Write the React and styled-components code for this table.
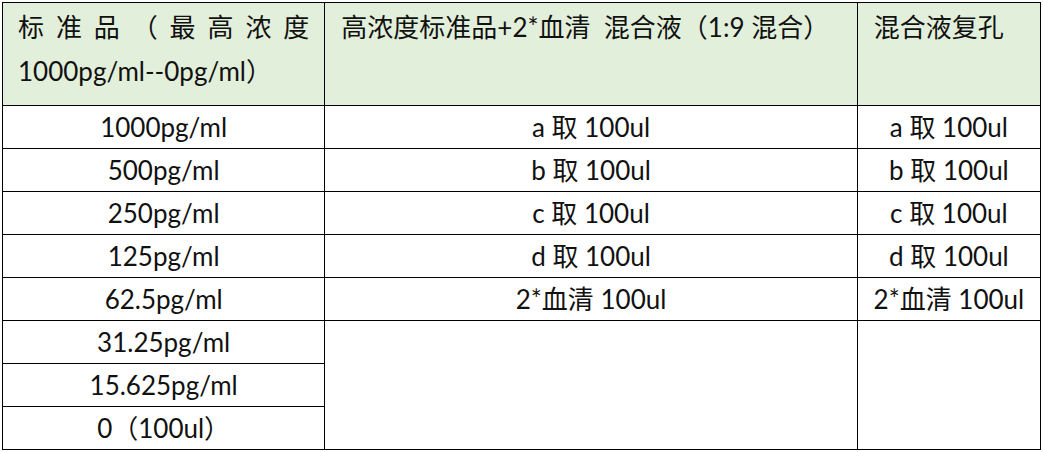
import React from "react";
import styled, { createGlobalStyle } from "styled-components";

const GlobalStyle = createGlobalStyle`
  html, body {
    margin: 0;
    padding: 0;
    background: #ffffff;
  }
  body {
    font-family: Lato, "Noto Sans CJK SC", sans-serif;
    color: #111111;
  }
`;

const Page = styled.div`
  padding: 2px 0 0 2px;
  width: 1044px;
  height: 452px;
  box-sizing: border-box;
`;

const Table = styled.table`
  border-collapse: collapse;
  table-layout: fixed;
  width: 1039px;
  font-size: 26px;
`;

const HeadRow = styled.tr`
  height: 103px;
  background: #e2efda;
`;

const HeadCell = styled.th`
  border: 1px solid #000000;
  padding: 2px ${(p) => p.$pad || 16}px 0;
  vertical-align: top;
  font-weight: 400;
  line-height: 44px;
  text-align: ${(p) => (p.$justify ? "justify" : "left")};
  white-space: ${(p) => (p.$justify ? "normal" : "pre")};
`;

const Row = styled.tr`
  height: 43px;
`;

const Cell = styled.td`
  border: 1px solid #000000;
  padding: 0 4px;
  text-align: center;
  vertical-align: middle;
  line-height: 42px;
  white-space: nowrap;
`;

const standards = [
  "1000pg/ml",
  "500pg/ml",
  "250pg/ml",
  "125pg/ml",
  "62.5pg/ml",
  "31.25pg/ml",
  "15.625pg/ml",
  "0（100ul）",
];

const mixes = ["a 取 100ul", "b 取 100ul", "c 取 100ul", "d 取 100ul", "2*血清 100ul"];

export default function App() {
  return (
    <Page>
      <GlobalStyle />
      <Table>
        <colgroup>
          <col style={{ width: 322 }} />
          <col style={{ width: 532 }} />
          <col style={{ width: 183 }} />
        </colgroup>
        <thead>
          <HeadRow>
            <HeadCell $justify $pad={15}>
              标准品（最高浓度1000pg/ml--0pg/ml）
            </HeadCell>
            <HeadCell>{"高浓度标准品+2*血清  混合液（1:9 混合）"}</HeadCell>
            <HeadCell>混合液复孔</HeadCell>
          </HeadRow>
        </thead>
        <tbody>
          {standards.map((s, i) => (
            <Row key={s}>
              <Cell>{s}</Cell>
              {i < mixes.length && <Cell>{mixes[i]}</Cell>}
              {i < mixes.length && <Cell>{mixes[i]}</Cell>}
              {i === mixes.length && <Cell rowSpan={3} />}
              {i === mixes.length && <Cell rowSpan={3} />}
            </Row>
          ))}
        </tbody>
      </Table>
    </Page>
  );
}
